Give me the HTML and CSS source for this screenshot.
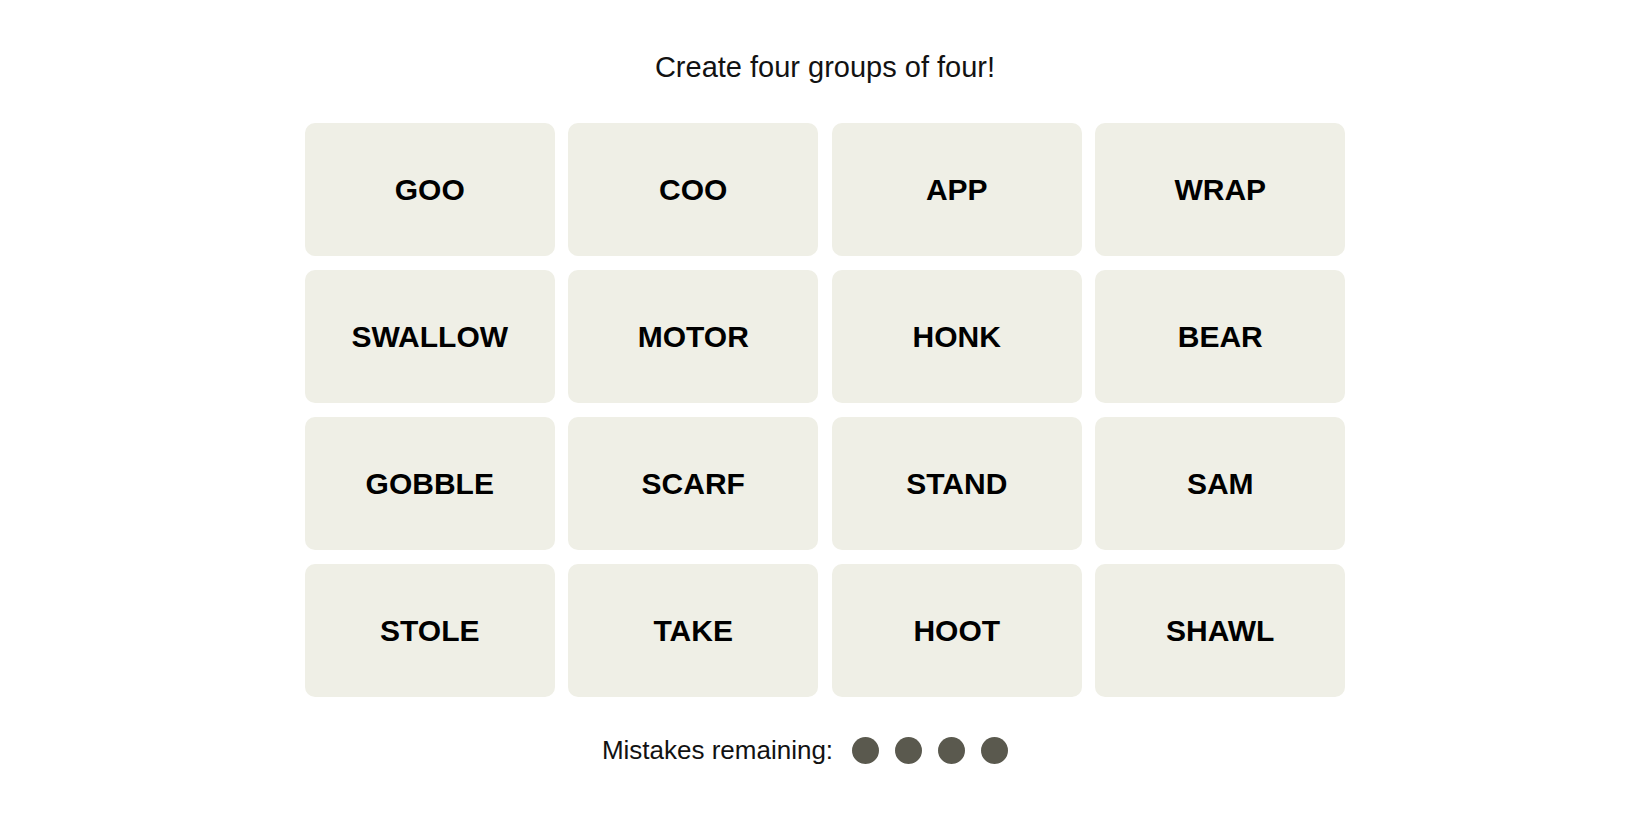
FILE: index.html
```html
<!DOCTYPE html>
<html>
<head>
<meta charset="utf-8">
<link rel="stylesheet" href="styles.css">
</head>
<body>
<main class="game">
  <p class="prompt">Create four groups of four!</p>
  <div class="board">
    <div class="tile">GOO</div>
    <div class="tile">COO</div>
    <div class="tile">APP</div>
    <div class="tile">WRAP</div>
    <div class="tile">SWALLOW</div>
    <div class="tile">MOTOR</div>
    <div class="tile">HONK</div>
    <div class="tile">BEAR</div>
    <div class="tile">GOBBLE</div>
    <div class="tile">SCARF</div>
    <div class="tile">STAND</div>
    <div class="tile">SAM</div>
    <div class="tile">STOLE</div>
    <div class="tile">TAKE</div>
    <div class="tile">HOOT</div>
    <div class="tile">SHAWL</div>
  </div>
  <div class="mistakes">
    <span class="mistakes-label">Mistakes remaining:</span>
    <span class="dots">
      <span class="dot"></span>
      <span class="dot"></span>
      <span class="dot"></span>
      <span class="dot"></span>
    </span>
  </div>
</main>
</body>
</html>
```
FILE: styles.css
```css
html, body {
  margin: 0;
  padding: 0;
  background: #ffffff;
}

.game {
  display: flex;
  flex-direction: column;
  align-items: center;
  font-family: "Liberation Sans", Arial, sans-serif;
  color: #121212;
}

.prompt {
  margin: 52px 0 0;
  font-size: 29px;
  line-height: 30px;
  font-weight: 400;
  color: #121212;
}

.board {
  margin-top: 41px;
  display: grid;
  grid-template-columns: repeat(4, 250px);
  grid-auto-rows: 133px;
  gap: 14px 13.5px;
}

.tile {
  background: #efefe6;
  border-radius: 10px;
  display: flex;
  align-items: center;
  justify-content: center;
  font-size: 30px;
  font-weight: 700;
  color: #000000;
}

.mistakes {
  margin-top: 38px;
  padding-right: 40px;
  display: flex;
  align-items: center;
  height: 30px;
}

.mistakes-label {
  font-size: 26px;
  line-height: 30px;
  color: #121212;
}

.dots {
  display: flex;
  gap: 16px;
  margin-left: 19px;
}

.dot {
  width: 27px;
  height: 27px;
  border-radius: 50%;
  background: #5a594e;
}
```
